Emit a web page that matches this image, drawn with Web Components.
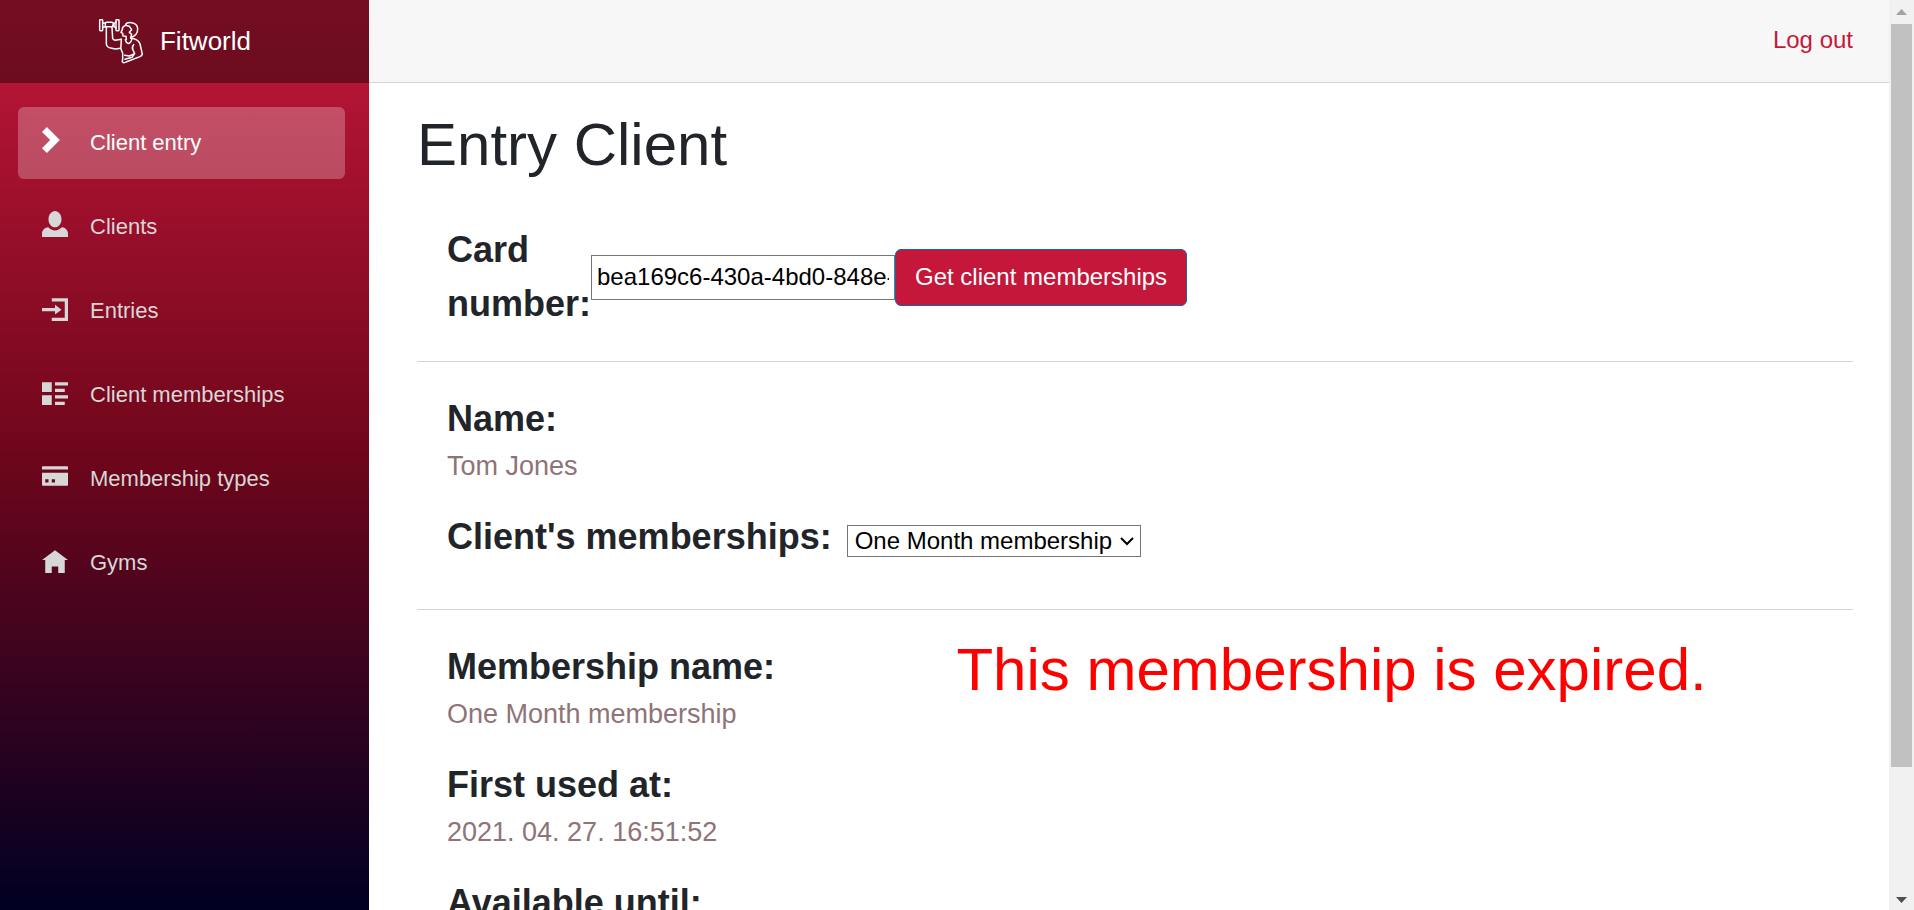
<!DOCTYPE html>
<html lang="en">
<head>
<meta charset="utf-8">
<meta name="viewport" content="width=device-width, initial-scale=1">
<title>Fitworld</title>
<style>
  html, body { height: 100%; margin: 0; }
  body {
    font: 24px/36px "Liberation Sans", Arial, sans-serif;
    color: #212529;
    background: #fff;
    overflow: hidden;
  }
</style>
</head>
<body>
<fit-app>
  <fit-sidebar slot="sidebar">
    <fit-brand slot="brand">Fitworld</fit-brand>
    <fit-nav-item icon="chevron" active>Client entry</fit-nav-item>
    <fit-nav-item icon="person">Clients</fit-nav-item>
    <fit-nav-item icon="login">Entries</fit-nav-item>
    <fit-nav-item icon="list">Client memberships</fit-nav-item>
    <fit-nav-item icon="card">Membership types</fit-nav-item>
    <fit-nav-item icon="home">Gyms</fit-nav-item>
  </fit-sidebar>
  <fit-topbar></fit-topbar>
  <fit-entry-page></fit-entry-page>
</fit-app>

<script>
  const define = (name, html, setup) => {
    const template = document.createElement('template');
    template.innerHTML = html;
    customElements.define(name, class extends HTMLElement {
      connectedCallback() {
        if (this.shadowRoot) return;
        this.attachShadow({ mode: 'open' }).append(template.content.cloneNode(true));
        if (setup) setup(this, this.shadowRoot);
      }
    });
  };

  const ICONS = {
    chevron: '<path d="M1.500 0l-1.500 1.500 2.500 2.500-2.500 2.500 1.500 1.500 4-4-4-4z"/>',
    person: '<path d="M4 0c-1.100 0-2 1.120-2 2.500s.900 2.500 2 2.500 2-1.120 2-2.500-.900-2.500-2-2.500zm-2.090 5c-1.060.050-1.910.920-1.910 2v1h8v-1c0-1.080-.840-1.950-1.910-2-.540.610-1.280 1-2.090 1-.810 0-1.550-.390-2.090-1z"/>',
    login: '<path transform="translate(0 1)" d="M3 0v1h4v5h-4v1h5v-7h-5zm1 2v1h-4v1h4v1l2-1.500-2-1.500z"/>',
    list: '<path transform="translate(0 1)" d="M0 0v3h3v-3h-3zm4 0v1h4v-1h-4zm0 2v1h3v-1h-3zm-4 2v3h3v-3h-3zm4 0v1h4v-1h-4zm0 2v1h3v-1h-3z"/>',
    card: '<path transform="translate(0 1)" d="M.250 0c-.140 0-.250.110-.250.250v.750h8v-.750c0-.140-.110-.250-.250-.250h-7.500zm-.250 2v3.750c0 .140.110.250.250.250h7.500c.140 0 .250-.110.250-.250v-3.750h-8zm1 2h1v1h-1v-1zm2 0h1v1h-1v-1z"/>',
    home: '<path transform="translate(0 1)" d="M4 0l-4 3h1v4h2v-2h2v2h2v-4.030l1 .030-4-3z"/>'
  };

  define('fit-scrollbar', `
    <style>
      :host { display: flex; flex-direction: column; width: 25px; background: #f1f1f1; }
      svg { display: block; width: 25px; height: 24px; flex: none; }
      .track { flex: 1; padding: 0 2px; }
      .thumb { background: #c1c1c1; }
    </style>
    <svg viewBox="0 0 25 24" aria-hidden="true"><path fill="#a3a3a3" d="M7 15l5.500-6 5.500 6z"/></svg>
    <div class="track"><div class="thumb"></div></div>
    <svg viewBox="0 0 25 24" aria-hidden="true"><path fill="#505050" d="M7 11h11l-5.500 6z"/></svg>
  `);

  define('fit-app', `
    <style>
      :host { display: flex; height: 100vh; }
      .view { flex: 1; min-width: 0; display: flex; align-items: flex-start; overflow-y: auto; scrollbar-width: none; }
      .main { flex: 1; min-width: 0; }
      ::slotted([slot=sidebar]) { position: sticky; top: 0; }
    </style>
    <div class="view">
      <slot name="sidebar"></slot>
      <div class="main"><slot></slot></div>
    </div>
    <fit-scrollbar></fit-scrollbar>
  `, (host, root) => {
    const view = root.querySelector('.view');
    const sync = () => {
      const bar = root.querySelector('fit-scrollbar').shadowRoot;
      if (!bar) return;
      const track = bar.querySelector('.track').clientHeight;
      const thumb = bar.querySelector('.thumb');
      thumb.style.height = Math.round(track * view.clientHeight / view.scrollHeight) + 'px';
      thumb.style.transform = `translateY(${Math.round(track * view.scrollTop / view.scrollHeight)}px)`;
    };
    view.addEventListener('scroll', sync);
    addEventListener('resize', sync);
    addEventListener('load', sync);
  });

  define('fit-sidebar', `
    <style>
      :host {
        display: block; box-sizing: border-box; width: 369px; height: 100vh; flex: none;
        background: linear-gradient(180deg, #c4173a 0%, #6e061b 50%, #000022 100%);
      }
      nav { display: flex; flex-direction: column; gap: 12px; padding: 24px 24px 0 18px; }
    </style>
    <slot name="brand"></slot>
    <nav><slot></slot></nav>
  `);

  define('fit-brand', `
    <style>
      :host { display: block; background: rgba(0, 0, 0, .4); }
      a {
        display: flex; align-items: center; justify-content: center; gap: 16px; box-sizing: border-box; height: 83px;
        padding: 0 20px 2px 0; font-size: 26px; color: #fff; text-decoration: none;
      }
      svg { width: 46px; height: 46px; fill: none; stroke: #fff; stroke-width: 4.500; stroke-linejoin: round; stroke-linecap: round; }
    </style>
    <a href="#">
      <svg viewBox="12 12 138 138" aria-hidden="true">
        <rect x="17" y="17" width="9" height="33" rx="2"/>
        <rect x="66" y="17" width="9" height="33" rx="2"/>
        <path d="M26 27h8v12h-8M66 24l-6 4v10l6 4M34 29q0-4 4-4h15q5 0 5 5l-3 8H34z"/>
        <path d="M37 40V90Q38 100 50 102L64 105 80 103M54 40L56 74Q60 80 68 78L82 76"/>
        <path d="M94 34C98 22 128 22 131 43C132 58 122 69 110 70M94 34Q84 38 85 47L81 55 86 58 87 66 96 67 97 76M94 34L106 37 113 47 106 55 113 61 110 72"/>
        <path d="M82 76C81 86 82 92 80 103L86 118 86 134 85 144Q90 148 96 144L138 128Q147 124 144 116L138 90Q134 78 120 74L110 72"/>
        <path d="M94 77Q97 90 106 88Q112 85 114 74M119 92Q112 100 117 108L122 119 106 126 92 124M122 119L114 130 93 136"/>
      </svg>
      <slot></slot>
    </a>
  `);

  define('fit-nav-item', `
    <style>
      :host { display: block; }
      a {
        display: flex; align-items: center; height: 72px; padding: 0 24px; border-radius: 6px;
        font-size: 22px; color: #d7d7d7; text-decoration: none;
      }
      :host([active]) a { background: rgba(255, 255, 255, .25); color: #fff; }
      .icon { width: 48px; padding-bottom: 6px; }
      svg { display: block; width: 26px; height: 26px; fill: currentColor; }
    </style>
    <a href="#"><span class="icon"><svg viewBox="0 0 8 8" aria-hidden="true"></svg></span><slot></slot></a>
  `, (host, root) => {
    root.querySelector('svg').innerHTML = ICONS[host.getAttribute('icon')];
    if (host.hasAttribute('active')) root.querySelector('a').setAttribute('aria-current', 'page');
  });

  define('fit-topbar', `
    <style>
      :host {
        display: flex; align-items: center; justify-content: flex-end; box-sizing: border-box;
        height: 83px; padding: 0 36px 2px 48px; background: #f7f7f7; border-bottom: 1px solid #d6d5d5;
      }
      a { color: #c4173a; text-decoration: none; }
    </style>
    <a href="#">Log out</a>
  `);

  define('fit-section', `
    <style>
      :host { display: block; padding: 30px; }
      :host([divided]) { border-bottom: 1px solid #d3d3d4; }
    </style>
    <slot></slot>
  `);

  define('fit-field', `
    <style>
      :host { display: block; margin-bottom: 24px; }
      .label { font-size: 36px; line-height: 54px; font-weight: bold; }
      .value { font-size: 27px; line-height: 40px; color: #8e7477; }
    </style>
    <div class="label"><slot name="label"></slot></div>
    <div class="value"><slot></slot></div>
  `);

  define('fit-entry-page', `
    <style>
      :host { display: block; padding: 26px 36px 32px 48px; }
      h1 { margin: 0 0 12px; font-size: 60px; line-height: 72px; font-weight: normal; }
      label { font-size: 36px; line-height: 54px; font-weight: bold; }
      .lookup { display: flex; align-items: center; }
      .lookup label { width: 144px; }
      input, select, button { font: inherit; box-sizing: border-box; }
      input {
        width: 304px; height: 45px; padding: 0 5px; color: #000; background: #fff;
        border: 1px solid #767676; border-radius: 0;
      }
      button {
        height: 57px; padding: 0 19px; color: #fff; background: #c4173a;
        border: 1px solid #1861ac; border-radius: 6px;
      }
      .choose { display: flex; align-items: baseline; gap: 15px; padding-bottom: 15px; }
      .select { display: inline-grid; align-items: center; }
      .select > * { grid-area: 1 / 1; }
      select {
        width: 294px; height: 32px; line-height: 28px; padding: 0 0 0 7px; color: #000; background: #fff;
        border: 1px solid #767676; border-radius: 0; appearance: none;
      }
      .select svg { justify-self: end; width: 14px; height: 10px; margin-right: 7px; fill: none; stroke: #000; stroke-width: 2; pointer-events: none; }
      .details { display: grid; grid-template-columns: 2fr 5fr; }
      .status { margin: 0; font-size: 60px; line-height: 60px; text-align: center; color: #f00; }
    </style>
    <h1>Entry Client</h1>
    <fit-section divided>
      <form class="lookup">
        <label for="card">Card number:</label>
        <input id="card" type="text" value="bea169c6-430a-4bd0-848e-">
        <button type="button">Get client memberships</button>
      </form>
    </fit-section>
    <fit-section divided>
      <fit-field><span slot="label">Name:</span>Tom Jones</fit-field>
      <div class="choose">
        <label for="membership">Client's memberships:</label>
        <span class="select">
          <select id="membership"><option>One Month membership</option></select>
          <svg viewBox="0 0 14 10" aria-hidden="true"><path d="M1 2l6 6 6-6"/></svg>
        </span>
      </div>
    </fit-section>
    <fit-section>
      <div class="details">
        <div>
          <fit-field><span slot="label">Membership name:</span>One Month membership</fit-field>
          <fit-field><span slot="label">First used at:</span>2021. 04. 27. 16:51:52</fit-field>
          <fit-field><span slot="label">Available until:</span>2021. 05. 27. 16:51:52</fit-field>
        </div>
        <p class="status">This membership is expired.</p>
      </div>
    </fit-section>
  `);
</script>
</body>
</html>
